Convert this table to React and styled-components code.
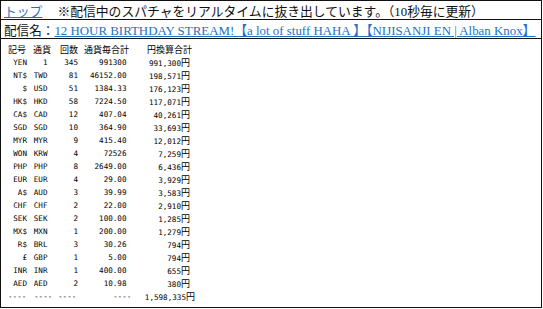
import React from 'react'
import styled, { createGlobalStyle } from 'styled-components'

const GlobalStyle = createGlobalStyle`
  html, body {
    margin: 0;
    padding: 0;
    background: #ffffff;
  }
`

const rows = [
  ['YEN', '1', '345', '991300', '991,300'],
  ['NT$', 'TWD', '81', '46152.00', '198,571'],
  ['$', 'USD', '51', '1384.33', '176,123'],
  ['HK$', 'HKD', '58', '7224.50', '117,071'],
  ['CA$', 'CAD', '12', '407.04', '40,261'],
  ['SGD', 'SGD', '10', '364.90', '33,693'],
  ['MYR', 'MYR', '9', '415.40', '12,012'],
  ['WON', 'KRW', '4', '72526', '7,259'],
  ['PHP', 'PHP', '8', '2649.00', '6,436'],
  ['EUR', 'EUR', '4', '29.00', '3,929'],
  ['A$', 'AUD', '3', '39.99', '3,583'],
  ['CHF', 'CHF', '2', '22.00', '2,910'],
  ['SEK', 'SEK', '2', '100.00', '1,285'],
  ['MX$', 'MXN', '1', '200.00', '1,279'],
  ['R$', 'BRL', '3', '30.26', '794'],
  ['£', 'GBP', '1', '5.00', '794'],
  ['INR', 'INR', '1', '400.00', '655'],
  ['AED', 'AED', '2', '10.98', '380']
]

const headers = ['記号', '通貨', '回数', '通貨毎合計', '円換算合計']

export default function App() {
  return (
    <>
      <GlobalStyle />
      <Frame>
        <TopBar>
          <Link href="#">トップ</Link>
          <Notice>※配信中のスパチャをリアルタイムに抜き出しています。（10秒毎に更新）</Notice>
        </TopBar>
        <StreamBar>
          <Label>配信名：</Label>
          <Link href="#">
            12 HOUR BIRTHDAY STREAM!【a lot of stuff HAHA 】【NIJISANJI EN | Alban Knox】
          </Link>
        </StreamBar>
        <Sheet>
          <HeadRow>
            {headers.map(h => (
              <HeadCell key={h}>{h}</HeadCell>
            ))}
          </HeadRow>
          {rows.map(r => (
            <DataRow key={r[0] + r[1]}>
              <Cell>{r[0]}</Cell>
              <Cell>{r[1]}</Cell>
              <Cell>{r[2]}</Cell>
              <Cell>{r[3]}</Cell>
              <Cell>
                {r[4]}
                <Yen>円</Yen>
              </Cell>
            </DataRow>
          ))}
          <TotalRow>
            <span>----</span>
            <span>----</span>
            <span>----</span>
            <span>----</span>
            <Cell>
              1,598,335<Yen>円</Yen>
            </Cell>
          </TotalRow>
        </Sheet>
      </Frame>
    </>
  )
}

const Frame = styled.div`
  box-sizing: border-box;
  width: 542px;
  height: 308px;
  border: 1px solid #111;
  display: flex;
  flex-direction: column;
  font-family: 'Liberation Serif', 'Noto Sans CJK JP', serif;
  color: #111;
`
const TopBar = styled.div`
  height: 18px;
  border-bottom: 1px solid #111;
  display: flex;
  align-items: center;
  padding: 0 3px;
  gap: 15px;
  font-size: 12.8px;
  white-space: nowrap;
  overflow: hidden;
`
const StreamBar = styled(TopBar)`
  gap: 0;
  font-size: 12.9px;
`
const Link = styled.a`
  color: #1f6fc5;
  text-decoration: underline;
`
const Notice = styled.span`
  color: #111;
`
const Label = styled.span`
  font-family: 'Noto Sans CJK JP', sans-serif;
  font-size: 12.6px;
`
const Sheet = styled.div`
  padding: 4px 0 0 7px;
  font-family: 'DejaVu Sans Mono', monospace;
  font-size: 7.6px;
  line-height: 13px;
  color: #000;
`
const HeadRow = styled.div`
  display: grid;
  grid-template-columns: 25px 27px 24px 63px auto;
  font-family: 'Noto Sans CJK JP', sans-serif;
  font-size: 9px;
  height: 13px;
`
const HeadCell = styled.span`
  white-space: nowrap;
`
const DataRow = styled.div`
  display: grid;
  grid-template-columns: 19px 20.5px 30.5px 48.5px 63.5px;
  height: 13px;
  white-space: nowrap;
`
const Cell = styled.span`
  text-align: right;
`
const TotalRow = styled.div`
  display: grid;
  grid-template-columns: 26px 24px 55px 18px 64px;
  height: 13px;
  white-space: nowrap;
`
const Yen = styled.span`
  font-family: 'Noto Sans CJK JP', sans-serif;
  font-size: 9px;
`
